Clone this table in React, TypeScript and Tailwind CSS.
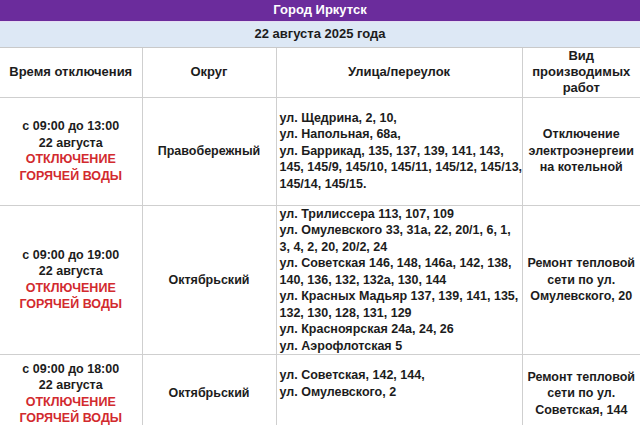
const rows = [
  {
    time: "с 09:00 до 13:00",
    district: "Правобережный",
    streets: [
      "ул. Щедрина, 2, 10,",
      "ул. Напольная, 68а,",
      "ул. Баррикад, 135, 137, 139, 141, 143,",
      "145, 145/9, 145/10, 145/11, 145/12, 145/13,",
      "145/14, 145/15.",
    ],
    work: ["Отключение", "электроэнергеии", "на котельной"],
    h: "h-[108px]",
    pad: "",
  },
  {
    time: "с 09:00 до 19:00",
    district: "Октябрьский",
    streets: [
      "ул. Трилиссера 113, 107, 109",
      "ул. Омулевского 33, 31а, 22, 20/1, 6, 1,",
      "3, 4, 2, 20, 20/2, 24",
      "ул. Советская 146, 148, 146а, 142, 138,",
      "140, 136, 132, 132а, 130, 144",
      "ул. Красных Мадьяр 137, 139, 141, 135,",
      "132, 130, 128, 131, 129",
      "ул. Красноярская 24а, 24, 26",
      "ул. Аэрофлотская 5",
    ],
    work: ["Ремонт тепловой", "сети по ул.", "Омулевского, 20"],
    h: "h-[147px]",
    pad: "",
  },
  {
    time: "с 09:00 до 18:00",
    district: "Октябрьский",
    streets: ["ул. Советская, 142, 144,", "ул. Омулевского, 2"],
    work: ["Ремонт тепловой", "сети по ул.", "Советская, 144"],
    h: "h-[78px]",
    pad: "pb-[20px]",
  },
];

export default function App() {
  return (
    <div className="w-[640px] h-[425px] overflow-hidden bg-white font-['Liberation_Sans',Arial,sans-serif] font-bold text-[12.5px] leading-[16.5px] text-[#1c1c1c]">
      <div className="h-[22px] bg-[#6b2c9c] border-b border-[#e6dcf3] flex items-center justify-center text-white text-[13px]">
        Город Иркутск
      </div>
      <div className="h-[26px] bg-[#dde8f5] border-b border-[#c9c9c9] flex items-center justify-center text-[13px]">
        22 августа 2025 года
      </div>
      <table className="table-fixed border-collapse w-[640px]">
        <colgroup>
          <col className="w-[142px]" />
          <col className="w-[134px]" />
          <col className="w-[246px]" />
          <col className="w-[118px]" />
        </colgroup>
        <thead>
          <tr className="h-[49px] text-[13px]">
            <th className="border-r border-b border-[#cfcfcf] font-bold text-center align-middle">Время отключения</th>
            <th className="border-r border-b border-[#cfcfcf] font-bold text-center align-middle">Округ</th>
            <th className="border-r border-b border-[#cfcfcf] font-bold text-center align-middle">Улица/переулок</th>
            <th className="border-b border-[#cfcfcf] font-bold text-center align-middle leading-[16px]">
              Вид
              <br />
              производимых
              <br />
              работ
            </th>
          </tr>
        </thead>
        <tbody>
          {rows.map((r, i) => (
            <tr key={i} className={r.h}>
              <td className="border-r border-b border-[#cfcfcf] text-center align-middle p-0">
                <div className="whitespace-nowrap">{r.time}</div>
                <div>22 августа</div>
                <div className="text-[#d22a2e]">ОТКЛЮЧЕНИЕ</div>
                <div className="text-[#d22a2e]">ГОРЯЧЕЙ ВОДЫ</div>
              </td>
              <td className="border-r border-b border-[#cfcfcf] text-center align-middle p-0">{r.district}</td>
              <td className={`border-r border-b border-[#cfcfcf] align-middle pl-[3px] pt-0 ${r.pad}`}>
                {r.streets.map((s, j) => (
                  <div key={j} className="whitespace-nowrap">
                    {s}
                  </div>
                ))}
              </td>
              <td className="border-b border-[#cfcfcf] text-center align-middle p-0">
                {r.work.map((w, j) => (
                  <div key={j} className="whitespace-nowrap">
                    {w}
                  </div>
                ))}
              </td>
            </tr>
          ))}
        </tbody>
      </table>
    </div>
  );
}
